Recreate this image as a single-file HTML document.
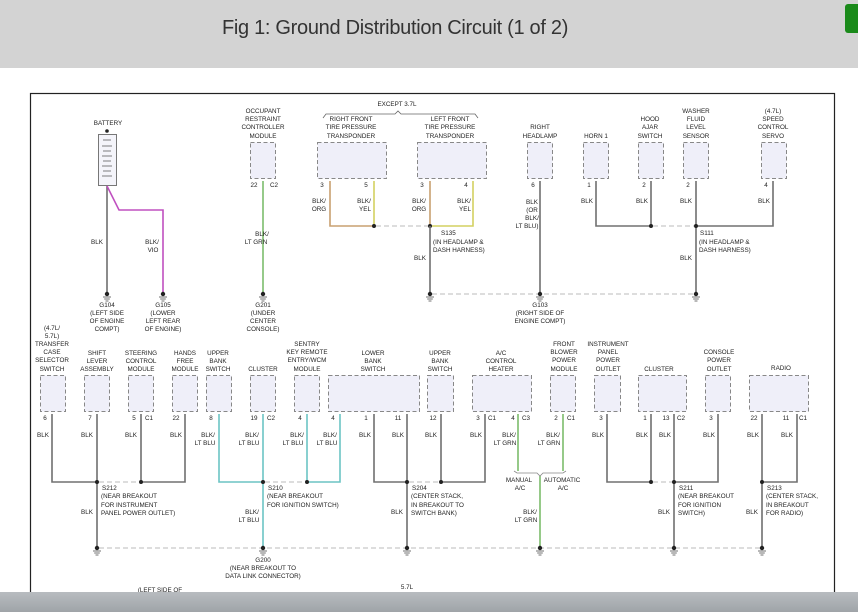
<!DOCTYPE html>
<html><head><meta charset="utf-8"><style>
html,body{margin:0;padding:0;width:858px;height:612px;overflow:hidden;background:#fff}
.hdr{position:absolute;left:0;top:0;width:858px;height:68px;background:#d3d3d3}
.ttl{position:absolute;left:0;width:790px;top:17px;text-align:center;font:20px "Liberation Sans",sans-serif;color:#333;letter-spacing:-0.3px}
.grn{position:absolute;left:845px;top:4px;width:13px;height:29px;background:#1a8a1a;border-radius:3px 0 0 3px}
.bot{position:absolute;left:0;top:592px;width:858px;height:20px;background:linear-gradient(#b8bcc0,#9fa4a8)}
svg{position:absolute;left:0;top:0}
text{font-family:"Liberation Sans",sans-serif;font-size:6.3px;fill:#222;text-anchor:middle}
.w{stroke:#707070;stroke-width:1.6;fill:none}
.t{stroke:#6cc4c4;stroke-width:1.6;fill:none}
.g{stroke:#7cbc6c;stroke-width:1.6;fill:none}
.d{stroke:#bbb;stroke-width:1;stroke-dasharray:5,3;fill:none}
.b{fill:#efeff9;stroke:#888;stroke-width:1;stroke-dasharray:4,2.5}
</style></head><body>
<div class="hdr"><div class="ttl">Fig 1: Ground Distribution Circuit (1 of 2)</div></div>
<div class="grn"></div>
<svg width="858" height="612">
<defs>
<g id="gnd"><circle r="2.2" fill="#222"/><path d="M-4 3H4M-2.8 5H2.8M-1.5 7H1.5" stroke="#444" stroke-width="0.8"/></g>
</defs>
<rect x="30.5" y="93.5" width="804" height="530" fill="none" stroke="#222" stroke-width="1.2"/>
<!-- TOP ROW -->
<text x="108" y="125">BATTERY</text>
<circle cx="107" cy="131" r="1.8" fill="#222"/>
<rect x="98.5" y="134.5" width="18" height="51" fill="#f4f4fa" stroke="#777"/>
<path d="M103 140h8M102 146h10M103 151h8M102 156h10M103 161h8M102 166h10M103 171h8M102 176h10" stroke="#555" stroke-width="0.8"/>
<path class="w" d="M107 186V292"/>
<path d="M107 186L119 210H163V292" stroke="#c050c0" stroke-width="1.6" fill="none"/>
<text x="97" y="244">BLK</text><text x="152" y="244">BLK/</text><text x="153" y="252">VIO</text>
<use href="#gnd" x="107" y="294"/><use href="#gnd" x="163" y="294"/>
<text x="107" y="307">G104</text><text x="107" y="315">(LEFT SIDE</text><text x="107" y="323">OF ENGINE</text><text x="107" y="331">COMPT)</text>
<text x="163" y="307">G105</text><text x="163" y="315">(LOWER</text><text x="163" y="323">LEFT REAR</text><text x="163" y="331">OF ENGINE)</text>

<text x="263" y="113">OCCUPANT</text><text x="263" y="121">RESTRAINT</text><text x="263" y="129">CONTROLLER</text><text x="263" y="138">MODULE</text>
<rect class="b" x="250.5" y="142.5" width="25" height="36"/>
<text x="254" y="187">22</text><text x="274" y="187">C2</text>
<path class="g" d="M263 181V292"/>
<text x="262" y="236">BLK/</text><text x="256" y="244">LT GRN</text>
<use href="#gnd" x="263" y="294"/>
<text x="263" y="307">G201</text><text x="263" y="315">(UNDER</text><text x="263" y="323">CENTER</text><text x="263" y="331">CONSOLE)</text>

<text x="397" y="106">EXCEPT 3.7L</text>
<path d="M323 118l3-4H395l3-3 3 3H475l3 4" stroke="#666" stroke-width="0.8" fill="none"/>
<text x="351" y="121">RIGHT FRONT</text><text x="351" y="129">TIRE PRESSURE</text><text x="351" y="138">TRANSPONDER</text>
<text x="450" y="121">LEFT FRONT</text><text x="450" y="129">TIRE PRESSURE</text><text x="450" y="138">TRANSPONDER</text>
<rect class="b" x="317.5" y="142.5" width="69" height="36"/>
<rect class="b" x="417.5" y="142.5" width="69" height="36"/>
<text x="322" y="187">3</text><text x="366" y="187">5</text><text x="422" y="187">3</text><text x="466" y="187">4</text>
<path d="M330 181V226H374" stroke="#c8a070" stroke-width="1.6" fill="none"/>
<path d="M374 181V226" stroke="#d4d060" stroke-width="1.6" fill="none"/>
<path d="M430 181V226" stroke="#c8a070" stroke-width="1.6" fill="none"/>
<path d="M473 181V226H430" stroke="#d4d060" stroke-width="1.6" fill="none"/>
<path class="d" d="M376 226H428"/>
<circle cx="374" cy="226" r="2" fill="#222"/><circle cx="430" cy="226" r="2" fill="#222"/>
<path class="w" d="M430 226V292"/>
<text x="319" y="203">BLK/</text><text x="319" y="211">ORG</text>
<text x="364" y="203">BLK/</text><text x="365" y="211">YEL</text>
<text x="419" y="203">BLK/</text><text x="419" y="211">ORG</text>
<text x="464" y="203">BLK/</text><text x="465" y="211">YEL</text>
<text x="441" y="235" style="text-anchor:start" x="434">S135</text>
<text x="433" y="244" style="text-anchor:start">(IN HEADLAMP &amp;</text>
<text x="433" y="252" style="text-anchor:start">DASH HARNESS)</text>
<text x="420" y="260">BLK</text>

<text x="540" y="129">RIGHT</text><text x="540" y="138">HEADLAMP</text>
<rect class="b" x="527.5" y="142.5" width="25" height="36"/>
<text x="533" y="187">6</text>
<path class="w" d="M540 181V292"/>
<text x="532" y="204">BLK</text><text x="532" y="212">(OR</text><text x="532" y="220">BLK/</text><text x="527" y="228">LT BLU)</text>
<text x="540" y="307">G103</text><text x="540" y="315">(RIGHT SIDE OF</text><text x="540" y="323">ENGINE COMPT)</text>

<text x="596" y="138">HORN 1</text>
<text x="650" y="121">HOOD</text><text x="650" y="129">AJAR</text><text x="650" y="138">SWITCH</text>
<text x="696" y="113">WASHER</text><text x="696" y="121">FLUID</text><text x="696" y="129">LEVEL</text><text x="696" y="138">SENSOR</text>
<text x="773" y="113">(4.7L)</text><text x="773" y="121">SPEED</text><text x="773" y="129">CONTROL</text><text x="773" y="138">SERVO</text>
<rect class="b" x="583.5" y="142.5" width="25" height="36"/>
<rect class="b" x="638.5" y="142.5" width="25" height="36"/>
<rect class="b" x="683.5" y="142.5" width="25" height="36"/>
<rect class="b" x="761.5" y="142.5" width="25" height="36"/>
<text x="589" y="187">1</text><text x="644" y="187">2</text><text x="688" y="187">2</text><text x="766" y="187">4</text>
<path class="w" d="M596 181V226H651V181M696 181V292M696 226H773V181"/>
<path class="d" d="M653 226H694"/>
<circle cx="651" cy="226" r="2" fill="#222"/><circle cx="696" cy="226" r="2" fill="#222"/>
<text x="587" y="203">BLK</text><text x="642" y="203">BLK</text><text x="686" y="203">BLK</text><text x="764" y="203">BLK</text>
<text x="700" y="235" style="text-anchor:start">S111</text>
<text x="699" y="244" style="text-anchor:start">(IN HEADLAMP &amp;</text>
<text x="699" y="252" style="text-anchor:start">DASH HARNESS)</text>
<text x="686" y="260">BLK</text>
<path class="d" d="M432 294H694"/>
<use href="#gnd" x="430" y="294"/><use href="#gnd" x="540" y="294"/><use href="#gnd" x="696" y="294"/>

<!-- BOTTOM ROW -->
<text x="52" y="330">(4.7L/</text><text x="52" y="338">5.7L)</text><text x="52" y="346">TRANSFER</text><text x="52" y="354">CASE</text><text x="52" y="362">SELECTOR</text><text x="52" y="371">SWITCH</text>
<text x="97" y="355">SHIFT</text><text x="97" y="363">LEVER</text><text x="97" y="371">ASSEMBLY</text>
<text x="141" y="355">STEERING</text><text x="141" y="363">CONTROL</text><text x="141" y="371">MODULE</text>
<text x="185" y="355">HANDS</text><text x="185" y="363">FREE</text><text x="185" y="371">MODULE</text>
<text x="218" y="355">UPPER</text><text x="218" y="363">BANK</text><text x="218" y="371">SWITCH</text>
<text x="263" y="371">CLUSTER</text>
<text x="307" y="346">SENTRY</text><text x="307" y="354">KEY REMOTE</text><text x="307" y="362">ENTRY/WCM</text><text x="307" y="371">MODULE</text>
<text x="373" y="355">LOWER</text><text x="373" y="363">BANK</text><text x="373" y="371">SWITCH</text>
<text x="440" y="355">UPPER</text><text x="440" y="363">BANK</text><text x="440" y="371">SWITCH</text>
<text x="501" y="355">A/C</text><text x="501" y="363">CONTROL</text><text x="501" y="371">HEATER</text>
<text x="564" y="346">FRONT</text><text x="564" y="354">BLOWER</text><text x="564" y="362">POWER</text><text x="564" y="371">MODULE</text>
<text x="608" y="346">INSTRUMENT</text><text x="608" y="354">PANEL</text><text x="608" y="362">POWER</text><text x="608" y="371">OUTLET</text>
<text x="659" y="371">CLUSTER</text>
<text x="719" y="354">CONSOLE</text><text x="719" y="362">POWER</text><text x="719" y="371">OUTLET</text>
<text x="781" y="370">RADIO</text>

<rect class="b" x="40.5" y="375.5" width="25" height="36"/>
<rect class="b" x="84.5" y="375.5" width="25" height="36"/>
<rect class="b" x="128.5" y="375.5" width="25" height="36"/>
<rect class="b" x="172.5" y="375.5" width="25" height="36"/>
<rect class="b" x="206.5" y="375.5" width="25" height="36"/>
<rect class="b" x="250.5" y="375.5" width="25" height="36"/>
<rect class="b" x="294.5" y="375.5" width="25" height="36"/>
<rect class="b" x="328.5" y="375.5" width="91" height="36"/>
<rect class="b" x="427.5" y="375.5" width="26" height="36"/>
<rect class="b" x="472.5" y="375.5" width="59" height="36"/>
<rect class="b" x="550.5" y="375.5" width="25" height="36"/>
<rect class="b" x="594.5" y="375.5" width="26" height="36"/>
<rect class="b" x="638.5" y="375.5" width="48" height="36"/>
<rect class="b" x="705.5" y="375.5" width="25" height="36"/>
<rect class="b" x="749.5" y="375.5" width="59" height="36"/>

<text x="45" y="420">6</text><text x="90" y="420">7</text><text x="134" y="420">5</text><text x="149" y="420">C1</text>
<text x="176" y="420">22</text><text x="211" y="420">8</text><text x="254" y="420">19</text><text x="271" y="420">C2</text>
<text x="300" y="420">4</text><text x="333" y="420">4</text><text x="366" y="420">1</text><text x="398" y="420">11</text>
<text x="433" y="420">12</text><text x="478" y="420">3</text><text x="492" y="420">C1</text><text x="513" y="420">4</text><text x="526" y="420">C3</text>
<text x="556" y="420">2</text><text x="571" y="420">C1</text><text x="601" y="420">3</text><text x="645" y="420">1</text><text x="666" y="420">13</text><text x="681" y="420">C2</text>
<text x="711" y="420">3</text><text x="754" y="420">22</text><text x="786" y="420">11</text><text x="803" y="420">C1</text>

<text x="43" y="437">BLK</text><text x="87" y="437">BLK</text><text x="131" y="437">BLK</text><text x="176" y="437">BLK</text>
<text x="208" y="437">BLK/</text><text x="205" y="445">LT BLU</text>
<text x="252" y="437">BLK/</text><text x="249" y="445">LT BLU</text>
<text x="297" y="437">BLK/</text><text x="293" y="445">LT BLU</text>
<text x="330" y="437">BLK/</text><text x="327" y="445">LT BLU</text>
<text x="365" y="437">BLK</text><text x="398" y="437">BLK</text><text x="431" y="437">BLK</text><text x="476" y="437">BLK</text>
<text x="509" y="437">BLK/</text><text x="505" y="445">LT GRN</text>
<text x="553" y="437">BLK/</text><text x="549" y="445">LT GRN</text>
<text x="598" y="437">BLK</text><text x="642" y="437">BLK</text><text x="665" y="437">BLK</text><text x="709" y="437">BLK</text>
<text x="753" y="437">BLK</text><text x="787" y="437">BLK</text>

<path class="w" d="M52 414V482H97M97 414V548M141 414V482H185V414"/>
<path class="d" d="M99 482H139"/>
<path class="t" d="M219 414V482H263M263 414V548M307 414V482H340V414"/>
<path class="d" d="M265 482H305"/>
<path class="w" d="M374 414V482H407M407 414V548M441 414V482H485V414"/>
<path class="d" d="M409 482H439"/>
<path class="g" d="M518 414V471M563 414V471M540 476V548"/>
<path d="M514 471l3 2H537l3 3 3-3H563l3-2" stroke="#888" stroke-width="0.8" fill="none"/>
<text x="519" y="482">MANUAL</text><text x="520" y="490">A/C</text>
<text x="562" y="482">AUTOMATIC</text><text x="563" y="490">A/C</text>
<path class="w" d="M607 414V482H651V414M674 414V548M674 482H718V414M762 414V548M762 482H797V414"/>
<path class="d" d="M653 482H672"/>
<circle cx="97" cy="482" r="2" fill="#222"/><circle cx="141" cy="482" r="2" fill="#222"/>
<circle cx="263" cy="482" r="2" fill="#222"/><circle cx="307" cy="482" r="2" fill="#222"/>
<circle cx="407" cy="482" r="2" fill="#222"/><circle cx="441" cy="482" r="2" fill="#222"/>
<circle cx="651" cy="482" r="2" fill="#222"/><circle cx="674" cy="482" r="2" fill="#222"/><circle cx="762" cy="482" r="2" fill="#222"/>

<g style="text-anchor:start">
<text x="102" y="490" style="text-anchor:start">S212</text><text x="101" y="498" style="text-anchor:start">(NEAR BREAKOUT</text><text x="101" y="507" style="text-anchor:start">FOR INSTRUMENT</text><text x="101" y="515" style="text-anchor:start">PANEL POWER OUTLET)</text>
<text x="268" y="490" style="text-anchor:start">S210</text><text x="267" y="498" style="text-anchor:start">(NEAR BREAKOUT</text><text x="267" y="507" style="text-anchor:start">FOR IGNITION SWITCH)</text>
<text x="412" y="490" style="text-anchor:start">S204</text><text x="411" y="498" style="text-anchor:start">(CENTER STACK,</text><text x="411" y="507" style="text-anchor:start">IN BREAKOUT TO</text><text x="411" y="515" style="text-anchor:start">SWITCH BANK)</text>
<text x="679" y="490" style="text-anchor:start">S211</text><text x="678" y="498" style="text-anchor:start">(NEAR BREAKOUT</text><text x="678" y="507" style="text-anchor:start">FOR IGNITION</text><text x="678" y="515" style="text-anchor:start">SWITCH)</text>
<text x="767" y="490" style="text-anchor:start">S213</text><text x="766" y="498" style="text-anchor:start">(CENTER STACK,</text><text x="766" y="507" style="text-anchor:start">IN BREAKOUT</text><text x="766" y="515" style="text-anchor:start">FOR RADIO)</text>
</g>
<text x="87" y="514">BLK</text>
<text x="252" y="514">BLK/</text><text x="249" y="522">LT BLU</text>
<text x="397" y="514">BLK</text>
<text x="530" y="514">BLK/</text><text x="526" y="522">LT GRN</text>
<text x="664" y="514">BLK</text><text x="752" y="514">BLK</text>
<path class="d" d="M99 548H760"/>
<use href="#gnd" x="97" y="548"/><use href="#gnd" x="263" y="548"/><use href="#gnd" x="407" y="548"/>
<use href="#gnd" x="540" y="548"/><use href="#gnd" x="674" y="548"/><use href="#gnd" x="762" y="548"/>
<text x="263" y="562">G200</text><text x="263" y="570">(NEAR BREAKOUT TO</text><text x="263" y="578">DATA LINK CONNECTOR)</text>
<text x="407" y="589">5.7L</text>
<text x="160" y="592">(LEFT SIDE OF</text>
</svg>
<div class="bot"></div>
</body></html>
